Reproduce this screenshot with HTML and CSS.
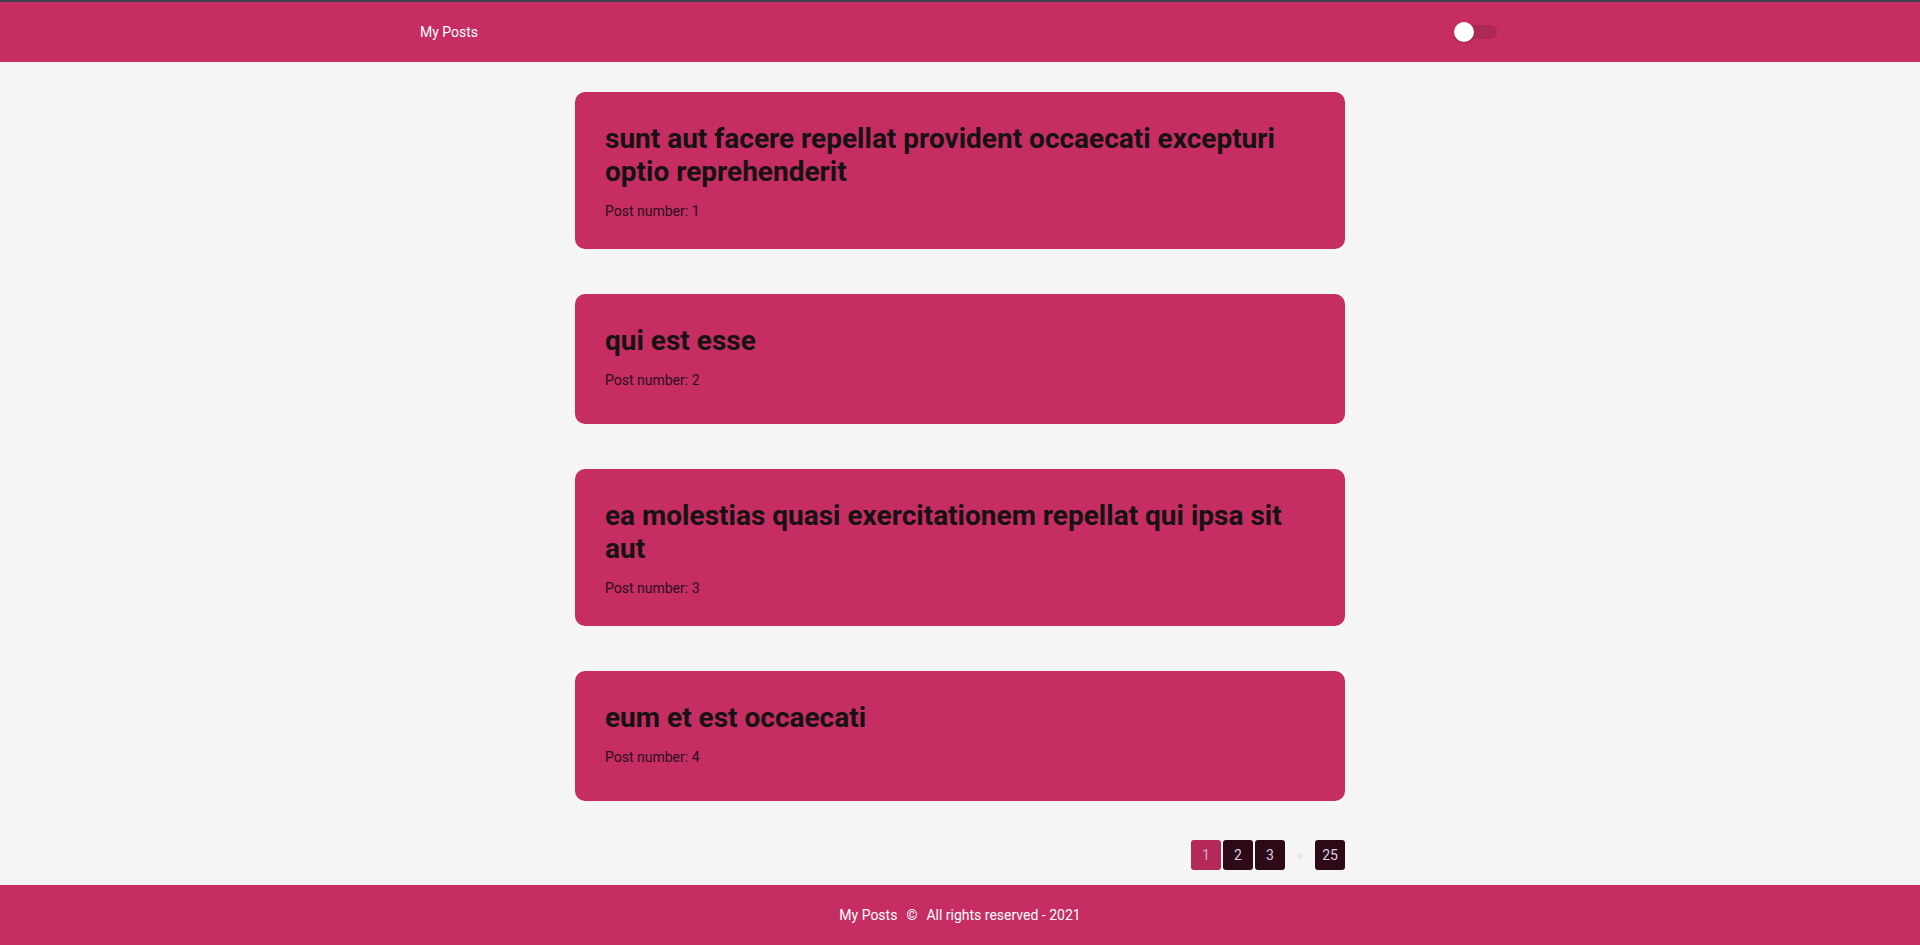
FILE: index.html
```html
<!DOCTYPE html>
<html lang="en">
<head>
<meta charset="utf-8">
<title>My Posts</title>
<link rel="stylesheet" href="styles.css">
</head>
<body>
<header class="topbar">
  <div class="topbar-inner">
    <span class="brand">My Posts</span>
    <span class="switch"><span class="switch-track"></span><span class="switch-thumb"></span></span>
  </div>
</header>
<main class="content">
  <article class="card">
    <h2 class="card-title">sunt aut facere repellat provident occaecati excepturi optio reprehenderit</h2>
    <p class="card-meta">Post number: 1</p>
  </article>
  <article class="card">
    <h2 class="card-title">qui est esse</h2>
    <p class="card-meta">Post number: 2</p>
  </article>
  <article class="card">
    <h2 class="card-title">ea molestias quasi exercitationem repellat qui ipsa sit aut</h2>
    <p class="card-meta">Post number: 3</p>
  </article>
  <article class="card">
    <h2 class="card-title">eum et est occaecati</h2>
    <p class="card-meta">Post number: 4</p>
  </article>
  <nav class="pager">
    <span class="page active">1</span>
    <span class="page">2</span>
    <span class="page">3</span>
    <span class="page-gap">»</span>
    <span class="page">25</span>
  </nav>
</main>
<footer class="footer"><span>My Posts</span><span class="copy">©</span><span>All rights reserved - 2021</span></footer>
</body>
</html>
```
FILE: styles.css
```css
* { box-sizing: border-box; }
html, body { margin: 0; padding: 0; }
body {
  background: #f5f5f5;
  font-family: Roboto, "Liberation Sans", sans-serif;
  border-top: 2px solid #3e4250;
}
.topbar {
  background: #c62d63;
  height: 60px;
}
.topbar-inner {
  width: 1080px;
  margin: 0 auto;
  height: 100%;
  display: flex;
  align-items: center;
  justify-content: space-between;
}
.brand {
  color: #fff;
  font-size: 14px;
}
.switch {
  position: relative;
  width: 44px;
  height: 20px;
  margin-right: 2px;
}
.switch-track {
  position: absolute;
  left: 9px;
  top: 3px;
  width: 34px;
  height: 14px;
  border-radius: 7px;
  background: #ad2854;
}
.switch-thumb {
  position: absolute;
  left: 0;
  top: 0;
  width: 20px;
  height: 20px;
  border-radius: 50%;
  background: #fff;
  box-shadow: 0 1px 2px rgba(0,0,0,0.2);
}
.content {
  width: 770px;
  margin: 0 auto;
  padding-top: 30px;
  display: flex;
  flex-direction: column;
  gap: 45px;
}
.card {
  background: #c62d63;
  border-radius: 10px;
  padding: 30px;
  min-height: 130px;
}
.card-title {
  margin: 0 0 15px;
  font-size: 28px;
  font-weight: 700;
  color: #161214;
}
.card-meta {
  margin: 0;
  font-size: 14px;
  color: #2a1019;
}
.pager {
  display: flex;
  justify-content: flex-end;
  gap: 2px;
  margin-top: -6px;
}
.page {
  width: 30px;
  height: 30px;
  border-radius: 3px;
  background: #2e0a19;
  color: #dcd0e4;
  font-size: 14px;
  display: flex;
  align-items: center;
  justify-content: center;
}
.page.active {
  background: #b5295a;
  color: #e9a9c4;
}
.page-gap {
  width: 26px;
  height: 30px;
  display: flex;
  align-items: center;
  justify-content: center;
  color: #dcdcdc;
  font-size: 14px;
}
.footer {
  margin-top: 15px;
  height: 60px;
  background: #c62d63;
  color: #fff;
  font-size: 14px;
  display: flex;
  align-items: center;
  justify-content: center;
}
.copy {
  margin: 0 9px;
}
```
